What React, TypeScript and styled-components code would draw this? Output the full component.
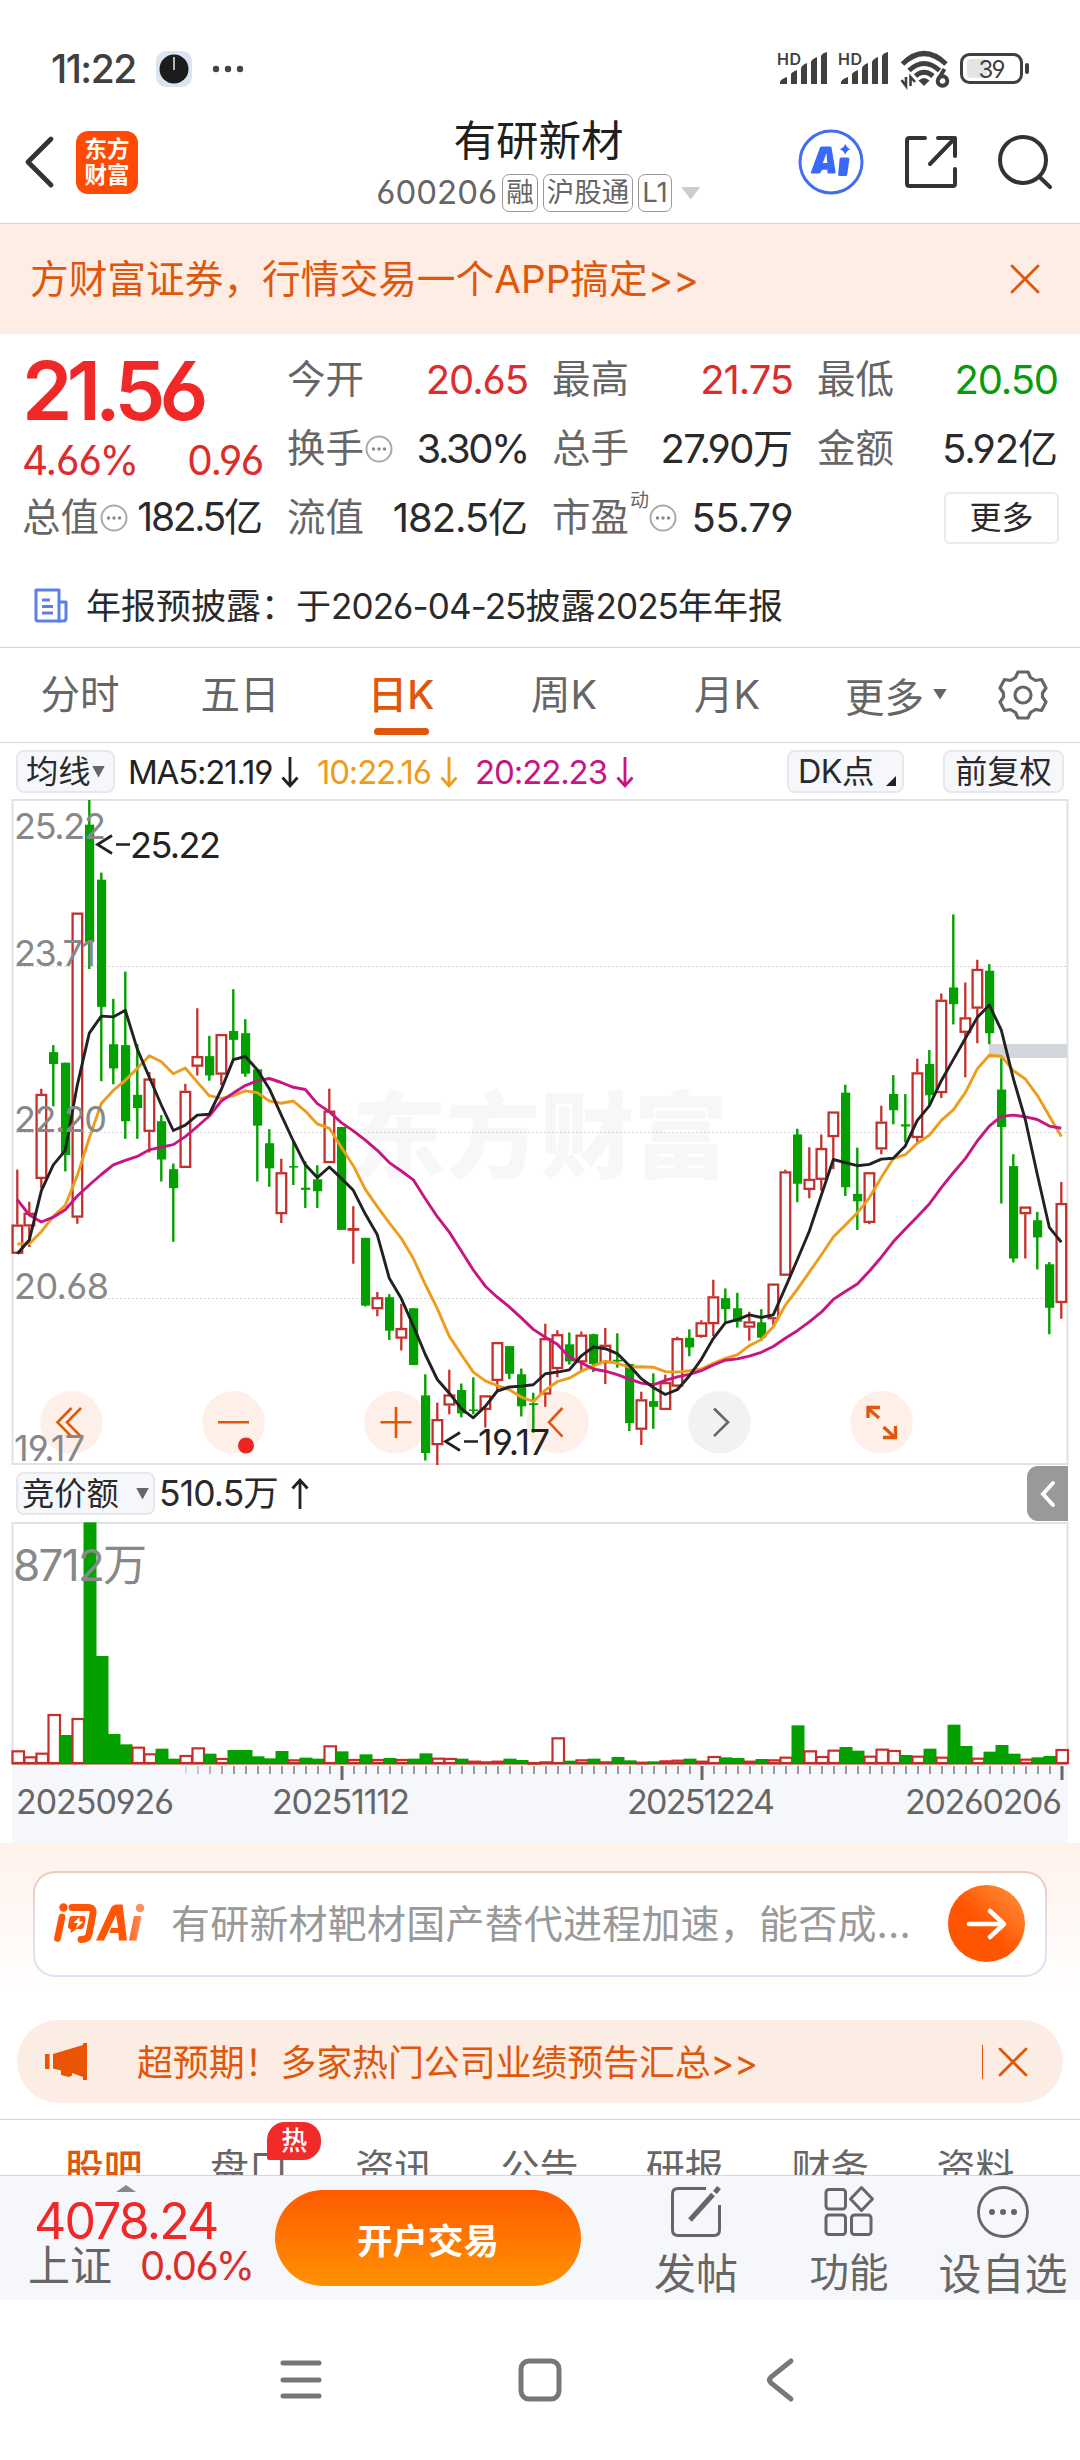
import React from "react";
import styled, { createGlobalStyle } from "styled-components";

const FONT = '"Inter", "Noto Sans CJK SC", sans-serif';
const RED = "#f02828";
const SOFT_RED = "#dd2c2c";
const GREEN = "#089a08";
const ORANGE = "#e0570c";
const INK = "#2a2a2a";
const GREY = "#666";

const GlobalStyle = createGlobalStyle`
  * { box-sizing: border-box; }
  body {
    margin: 0;
    background: #fff;
    font-family: ${FONT};
    font-feature-settings: "cv03", "cv04", "ss01" 0;
    color: ${INK};
  }
  svg { display: block; flex: none; overflow: visible; }
`;

const Screen = styled.div`
  width: 1080px;
  height: 2460px;
  display: flex;
  flex-direction: column;
  background: #fff;
  overflow: hidden;
  white-space: nowrap;
`;

const Txt = styled.span<{
  $size: number;
  $color?: string;
  $ls?: number;
  $weight?: number;
}>`
  font-size: ${(p) => p.$size}px;
  color: ${(p) => p.$color || INK};
  letter-spacing: ${(p) => p.$ls || 0}px;
  font-weight: ${(p) => p.$weight || 400};
  line-height: 1.2;
  display: inline-flex;
  align-items: baseline;
`;

const Num = styled.span<{ $ls: number; $size?: number }>`
  letter-spacing: ${(p) => p.$ls}px;
  font-size: ${(p) => (p.$size ? `${p.$size}px` : "inherit")};
`;

/* ---------- status bar ---------- */

const StatusBar = styled.div`
  height: 112px;
  padding: 26px 50px 0 51px;
  display: flex;
  align-items: center;
  justify-content: space-between;
`;

const Cluster = styled.div<{ $gap?: number }>`
  display: flex;
  align-items: center;
  gap: ${(p) => p.$gap || 0}px;
`;

const ClockIcon = () => (
  <svg width="36" height="36" viewBox="0 0 36 36">
    <rect width="36" height="36" rx="10" fill="#dbe5f2" />
    <circle cx="18" cy="18" r="14.5" fill="#1c1c1c" />
    <path d="M18 6v13" stroke="#ddd" strokeWidth="1.6" />
  </svg>
);

const Dots = () => (
  <svg width="32" height="8" viewBox="0 0 32 8" fill="#444">
    <circle cx="4" cy="4" r="3.2" />
    <circle cx="16" cy="4" r="3.2" />
    <circle cx="28" cy="4" r="3.2" />
  </svg>
);

const Signal = () => (
  <svg width="50" height="34" viewBox="0 0 50 34" fill="#404040">
    <text x="-1" y="12.500" fontSize="16" fontWeight="600" textLength="24">
      HD
    </text>
    <path d="M2 30q1-3 7-5v7h-7zM13 22q1-2 6-4v14h-6zM23 16q1-3 6-5v21h-6zM33 10q1-3 6-5v27h-6zM43 4q1-3 6-4v32h-6z" />
  </svg>
);

/* Wi-Fi 6 mark: three arcs, traffic arrows on the left and the generation digit on the right */
const Wifi = () => (
  <svg width="48" height="40" viewBox="0 0 48 40">
    <g fill="none" stroke="#404040" strokeWidth="5">
      <path d="M1.500 15Q23 -6 45 15" />
      <path d="M8 21.500Q23 7.500 38.500 21.500" />
      <path d="M14.500 27Q23 19.500 32 27" />
    </g>
    <path d="M23 37l-5.500-5.500q5.500-5 11 0z" fill="#404040" />
    <path d="M0.500 31l4.500 6V28M9.500 37V28l4.500 5" fill="none" stroke="#404040" strokeWidth="2.600" />
    <circle cx="41.500" cy="32" r="4.800" fill="#fff" stroke="#404040" strokeWidth="4" />
    <path d="M37.500 30l6-10" stroke="#404040" strokeWidth="4" />
  </svg>
);

const Battery = () => (
  <svg width="70" height="32" viewBox="0 0 70 32">
    <rect x="1.500" y="1.500" width="60" height="28" rx="8" fill="#fff" stroke="#404040" strokeWidth="3" />
    <rect x="7" y="6" width="20" height="19" rx="4" fill="#e4e4e4" />
    <rect x="65" y="10" width="4" height="11" rx="2" fill="#404040" />
    <text x="18.500" y="24.500" fontSize="24" fill="#404040" textLength="27">
      39
    </text>
  </svg>
);

/* ---------- header ---------- */

const Header = styled.header`
  height: 112px;
  border-bottom: 1px solid #d4d5d9;
  display: grid;
  grid-template-columns: 1fr auto 1fr;
  padding: 0 28px 0 24px;
`;

const HeaderLeft = styled.div`
  display: flex;
  align-items: center;
  gap: 22px;
  padding-bottom: 11px;
`;

const HeaderRight = styled.div`
  display: flex;
  align-items: center;
  justify-content: flex-end;
  gap: 40px;
  padding-bottom: 11px;
`;

const BrandMark = styled.div`
  width: 62px;
  height: 63px;
  border-radius: 12px;
  background: #ff4a05;
  color: #fff;
  font-size: 22.5px;
  font-weight: 700;
  line-height: 26px;
  display: flex;
  align-items: center;
  justify-content: center;
  text-align: center;
  white-space: pre;
`;

const TitleBlock = styled.div`
  display: flex;
  flex-direction: column;
  align-items: center;
  padding: 3px 0 0 1px;
`;

const CodeRow = styled.div`
  display: flex;
  align-items: center;
  height: 38px;
  margin-top: 8px;
  gap: 5px;
`;

const Tag = styled.span`
  height: 38px;
  padding: 0 3px;
  border: 1.5px solid #999;
  border-radius: 7px;
  color: ${GREY};
  font-size: 27.5px;
  line-height: 34px;
`;

const Tri = styled.i<{ $w: number; $h: number; $color: string; $up?: boolean; $ml?: number }>`
  width: ${(p) => p.$w}px;
  height: ${(p) => p.$h}px;
  margin-left: ${(p) => p.$ml || 0}px;
  flex: none;
  background: ${(p) => p.$color};
  clip-path: ${(p) =>
    p.$up ? "polygon(50% 0, 100% 100%, 0 100%)" : "polygon(0 0, 100% 0, 50% 100%)"};
`;

const BackIcon = () => (
  <svg width="30" height="52" viewBox="0 0 30 52">
    <path d="M27 3L4 26l23 23" fill="none" stroke="#333" strokeWidth="4.800" strokeLinecap="round" strokeLinejoin="round" />
  </svg>
);

const AiIcon = () => (
  <svg width="66" height="66" viewBox="0 0 66 66">
    <circle cx="33" cy="33" r="31" fill="none" stroke="#3f6ef5" strokeWidth="3" />
    <g fill="#3a68fb">
      <path
        fillRule="evenodd"
        d="M22 18.500q.8-1 2-1h8q1.400 0 1.600 1.400l4 24q.3 1.700-1.300 1.700h-5.500q-1.400 0-1.400-1.400v-2.400h-5.200l-1.500 2.500q-.8 1.300-2 1.300h-6.500q-2 0-1.100-1.800zM28.500 24l-3.700 10h4.500z"
      />
      <path d="M43 28.500h7q1.600 0 1.400 1.500l-2.200 15.500q-.2 1.500-1.700 1.500h-5.800q-1.700 0-1.500-1.600l1.400-15.400q.1-1.500 1.400-1.500z" />
      <path d="M47.500 15q1.300 4 5 5.200-4 1.400-5.200 5.200-1.500-3.800-5.300-5.200 4-1.400 5.500-5.200z" />
    </g>
  </svg>
);

const ShareIcon = () => (
  <svg width="54" height="54" viewBox="0 0 54 54">
    <g fill="none" stroke="#333" strokeWidth="4" strokeLinecap="round" strokeLinejoin="round">
      <path d="M21 3H5.500Q3 3 3 5.500v43Q3 51 5.500 51H49q2 0 2-2.500V34" />
      <path d="M34 3h17v18M51 3L26 29" />
    </g>
  </svg>
);

const SearchIcon = () => (
  <svg width="54" height="54" viewBox="0 0 54 54">
    <g fill="none" stroke="#333" strokeWidth="4" strokeLinecap="round">
      <circle cx="25" cy="25" r="23" />
      <path d="M41.500 42L52 52" />
    </g>
  </svg>
);

/* ---------- banner ---------- */

const Banner = styled.div`
  height: 110px;
  padding: 0 40px 0 30px;
  display: flex;
  align-items: center;
  justify-content: space-between;
  background: #fdede4;
`;

const CrossIcon = () => (
  <svg width="30" height="30" viewBox="0 0 30 30">
    <path d="M2 2l26 26M28 2L2 28" stroke={ORANGE} strokeWidth="2.800" strokeLinecap="round" />
  </svg>
);

/* ---------- quote ---------- */

const Quote = styled.section`
  height: 314px;
  border-bottom: 1px solid #d4d5d9;
  display: flex;
  flex-direction: column;
`;

const QuoteGrid = styled.div`
  height: 221px;
  padding: 11px 22px 0 22px;
  display: grid;
  grid-template-columns: repeat(4, 1fr);
  column-gap: 24px;
`;

const Col = styled.div`
  display: flex;
  flex-direction: column;
`;

const Cell = styled.div<{ $h?: number }>`
  height: ${(p) => p.$h || 69}px;
  display: flex;
  align-items: center;
  justify-content: space-between;
  min-width: 0;
`;

const LabelGroup = styled.span`
  display: flex;
  align-items: center;
  gap: 1px;
`;

const SupNote = styled.span`
  font-size: 19px;
  color: ${GREY};
  align-self: flex-start;
  margin: -9px -1px 0 0;
`;

const MoreButton = styled.button`
  width: 115px;
  height: 52px;
  margin-right: -1px;
  border: 2px solid #e8eaec;
  border-radius: 6px;
  background: #fff;
  font: 400 32px ${FONT};
  color: ${INK};
  padding: 0;
  line-height: 46px;
`;

const CellEnd = styled(Cell)`
  justify-content: flex-end;
`;

const Ellipsis = () => (
  <svg width="28" height="28" viewBox="0 0 28 28">
    <circle cx="14" cy="14" r="12.500" fill="none" stroke="#aaa" strokeWidth="2" />
    <g fill="#888">
      <circle cx="8.500" cy="14" r="1.700" />
      <circle cx="14" cy="14" r="1.700" />
      <circle cx="19.500" cy="14" r="1.700" />
    </g>
  </svg>
);

const Notice = styled.div`
  height: 54px;
  margin-top: 24px;
  padding-left: 34px;
  display: flex;
  align-items: center;
  gap: 18px;
`;

const ReportIcon = () => (
  <svg width="34" height="36" viewBox="0 0 34 36">
    <g fill="none" stroke="#5a7fe6" strokeWidth="3" strokeLinejoin="round">
      <path d="M2 2h23v31H4q-2 0-2-2z" />
      <path d="M25 14h7v16q0 3-3 3h-5" />
      <path d="M8 12h8M8 18.500h11M8 25h11" />
    </g>
  </svg>
);

type QuoteItem = {
  label: string;
  value: string;
  unit?: string;
  color?: string;
  info?: boolean;
  sup?: string;
  ls?: number;
};

const quoteColumns: QuoteItem[][] = [
  [
    { label: "今开", value: "20.65", color: SOFT_RED },
    { label: "换手", value: "3.30%", info: true, ls: -2.4 },
    { label: "流值", value: "182.5", unit: "亿" },
  ],
  [
    { label: "最高", value: "21.75", color: SOFT_RED },
    { label: "总手", value: "27.90", unit: "万", ls: -1.5 },
    { label: "市盈", value: "55.79", info: true, sup: "动", ls: -0.6 },
  ],
  [
    { label: "最低", value: "20.50", color: GREEN },
    { label: "金额", value: "5.92", unit: "亿" },
  ],
];

const Value = ({ value, unit, color, ls = -1.1 }: { value: string; unit?: string; color?: string; ls?: number }) => (
  <Txt $size={40} $color={color}>
    <Num $ls={ls}>{value}</Num>
    {unit}
  </Txt>
);

/* ---------- period tabs ---------- */

const Periods = styled.nav`
  height: 95px;
  border-bottom: 1px solid #d4d5d9;
  padding: 0 30px 0 0;
  display: flex;
  align-items: center;
`;

const Period = styled.div<{ $active?: boolean; $w?: number }>`
  width: ${(p) => p.$w || 162}px;
  height: 94px;
  display: flex;
  flex-direction: column;
  align-items: center;
  font-size: 39.5px;
  line-height: 94px;
  color: ${(p) => (p.$active ? ORANGE : GREY)};
  font-weight: ${(p) => (p.$active ? 500 : 400)};

  &::after {
    content: "";
    width: 55px;
    height: 7px;
    margin-top: -14px;
    flex: none;
    border-radius: 4px;
    background: ${(p) => (p.$active ? ORANGE : "transparent")};
  }
`;

const MorePeriod = styled.div`
  flex: 1;
  display: flex;
  align-items: center;
  gap: 9px;
  padding: 0 0 2px 37px;
  font-size: 39.5px;
  color: ${GREY};
`;

const GearIcon = () => (
  <svg width="54" height="54" viewBox="-27 -27 54 54" fill="none" stroke="#666" strokeWidth="3.200" strokeLinejoin="round">
    <path d="M-5 -23H5L7.500 -17.500L12.500 -14.500L18.500 -15.500L23 -7L19.500 -2V2L23 7L18.500 15.500L12.500 14.500L7.500 17.500L5 23H-5L-7.500 17.500L-12.500 14.500L-18.500 15.500L-23 7L-19.500 2V-2L-23 -7L-18.500 -15.500L-12.500 -14.500L-7.500 -17.500Z" />
    <circle r="8" />
  </svg>
);

/* ---------- indicator rows ---------- */

const IndicatorRow = styled.div`
  height: 57px;
  padding: 0 16px;
  display: flex;
  align-items: center;
`;

const Pill = styled.div<{ $w: number; $h?: number; $pad?: number }>`
  width: ${(p) => p.$w}px;
  height: ${(p) => p.$h || 43}px;
  padding: 0 ${(p) => p.$pad ?? 8}px;
  display: flex;
  align-items: center;
  justify-content: space-between;
  border: 2px solid #e6e8ec;
  border-radius: 8px;
  background: #f6f7fa;
  font-size: 32.3px;
  line-height: 38px;
`;

const MaItem = styled.div<{ $color: string; $w: number; $pad?: number }>`
  width: ${(p) => p.$w}px;
  padding-left: ${(p) => p.$pad || 0}px;
  display: flex;
  align-items: center;
  gap: 9px;
  color: ${(p) => p.$color};
  font-size: 33px;
`;

const Spacer = styled.div`
  flex: 1;
`;

const Corner = styled.i`
  width: 10px;
  height: 10px;
  align-self: flex-end;
  margin: 0 -3px 5px 0;
  background: #222;
  clip-path: polygon(100% 0, 100% 100%, 0 100%);
`;

const Arrow = ({ color, up }: { color: string; up?: boolean }) => (
  <svg width="18" height="32" viewBox="0 0 18 32" fill="none" stroke={color} strokeWidth="2.800">
    {up ? <path d="M9 31V2M1.500 10.500L9 2l7.500 8.500" /> : <path d="M9 1v29M1.500 21.500L9 30l7.500-8.500" />}
  </svg>
);

const VolumeHeader = styled.div`
  height: 57px;
  padding: 0 12px 0 16px;
  display: flex;
  align-items: center;
  gap: 4px;
`;

const AuctionValue = styled.div`
  display: flex;
  align-items: baseline;
  margin-right: 8px;
  font-size: 35.5px;
  line-height: 42px;
`;

const SideTab = styled.div`
  width: 41px;
  height: 55px;
  border-radius: 11px 0 0 11px;
  background: #999;
  display: flex;
  align-items: center;
  justify-content: center;
`;

/* ---------- chart data ---------- */

/* [direction, high, body top, body bottom, low] on a 1509-step price ladder starting at 22 */
type Candle = [0 | 1, number, number, number, number];

const candles: Candle[] = [
  [1, 862, 987, 1053, 1053], [1, 935, 960, 991, 1038], [1, 678, 690, 883, 905], [0, 579, 595, 622, 718],
  [0, 619, 619, 829, 866], [1, 278, 278, 971, 985], [0, 22, 78, 345, 406], [0, 187, 203, 492, 661],
  [0, 474, 577, 632, 668], [0, 412, 579, 752, 792], [0, 577, 692, 722, 792], [1, 640, 655, 776, 823],
  [0, 738, 752, 839, 889], [0, 848, 861, 904, 1026], [1, 667, 683, 858, 858], [1, 495, 604, 628, 648],
  [0, 558, 604, 648, 660], [1, 554, 554, 646, 670], [0, 452, 547, 567, 612], [0, 520, 552, 644, 651],
  [0, 634, 634, 762, 889], [0, 770, 802, 859, 901], [1, 837, 868, 963, 983], [0, 800, 854, 857, 897],
  [0, 843, 903, 908, 949], [0, 852, 884, 911, 949], [1, 678, 728, 847, 847], [0, 765, 765, 999, 999],
  [1, 945, 995, 999, 1076], [0, 1017, 1017, 1171, 1173], [1, 1140, 1152, 1179, 1195], [0, 1145, 1152, 1228, 1249],
  [1, 1167, 1222, 1246, 1273], [0, 1177, 1177, 1306, 1306], [0, 1327, 1375, 1506, 1523], [1, 1392, 1429, 1488, 1533],
  [1, 1317, 1373, 1398, 1418], [0, 1348, 1363, 1416, 1425], [0, 1334, 1407, 1410, 1418], [1, 1375, 1375, 1408, 1448],
  [1, 1254, 1254, 1342, 1365], [0, 1263, 1263, 1326, 1338], [0, 1314, 1327, 1400, 1423], [0, 1369, 1393, 1397, 1460],
  [1, 1212, 1245, 1373, 1401], [1, 1227, 1236, 1315, 1334], [0, 1232, 1259, 1298, 1305], [1, 1230, 1237, 1300, 1322],
  [0, 1235, 1236, 1304, 1322], [1, 1222, 1260, 1302, 1349], [0, 1234, 1294, 1298, 1312], [0, 1304, 1304, 1438, 1456],
  [1, 1367, 1384, 1453, 1488], [0, 1325, 1388, 1401, 1451], [1, 1328, 1345, 1408, 1408], [1, 1242, 1245, 1355, 1357],
  [0, 1225, 1244, 1266, 1286], [1, 1204, 1209, 1242, 1244], [1, 1112, 1150, 1213, 1240], [0, 1132, 1154, 1179, 1210],
  [0, 1142, 1177, 1208, 1221], [1, 1185, 1207, 1221, 1251], [0, 1179, 1209, 1244, 1251], [1, 1121, 1121, 1202, 1215],
  [1, 862, 866, 1103, 1103], [0, 769, 782, 894, 936], [1, 811, 883, 908, 927], [1, 782, 813, 885, 910],
  [1, 730, 730, 788, 861], [0, 669, 687, 902, 922], [0, 812, 917, 934, 999], [1, 868, 868, 983, 986],
  [1, 717, 753, 816, 827], [0, 647, 690, 727, 759], [0, 690, 759, 764, 800], [1, 610, 641, 790, 802],
  [0, 590, 622, 693, 717], [1, 462, 476, 688, 699], [0, 282, 448, 486, 532], [1, 437, 516, 551, 652],
  [1, 385, 406, 496, 575], [0, 395, 410, 552, 577], [0, 609, 680, 765, 939], [0, 827, 854, 1064, 1073],
  [1, 946, 946, 963, 1064], [0, 958, 977, 1016, 1089], [0, 1072, 1077, 1176, 1236], [1, 890, 938, 1165, 1201],
];

const ma5 = [
  1053, 1022, 910, 851, 818, 670, 552, 513, 515, 500, 588, 652, 715, 773, 761, 738, 736, 680, 612, 605, 635, 678,
  738, 797, 851, 880, 856, 882, 909, 963, 1010, 1109, 1155, 1217, 1282, 1339, 1370, 1405, 1426, 1400, 1365, 1356,
  1354, 1351, 1326, 1322, 1317, 1285, 1265, 1269, 1280, 1307, 1337, 1357, 1373, 1362, 1331, 1293, 1246, 1210, 1203,
  1192, 1198, 1192, 1130, 1067, 1002, 920, 839, 846, 853, 850, 838, 836, 808, 750, 717, 660, 612, 564, 516, 488,
  545, 655, 748, 873, 993, 1027,
];

const ma10 = [
  1031, 1030, 1003, 968, 943, 875, 790, 712, 682, 659, 632, 603, 617, 644, 631, 663, 694, 700, 694, 683, 687, 706,
  711, 706, 729, 758, 768, 811, 853, 907, 946, 983, 1018, 1064, 1123, 1178, 1241, 1282, 1322, 1342, 1353, 1362, 1379,
  1389, 1363, 1344, 1336, 1320, 1308, 1297, 1302, 1311, 1310, 1311, 1321, 1322, 1319, 1315, 1302, 1291, 1283, 1262,
  1248, 1219, 1170, 1134, 1095, 1056, 1015, 988, 960, 926, 880, 837, 828, 802, 784, 750, 726, 687, 633, 602, 604,
  637, 656, 693, 740, 787,
];

const ma20 = [
  930, 965, 981, 970, 953, 922, 897, 873, 851, 841, 832, 817, 811, 805, 787, 764, 740, 706, 688, 671, 660, 655, 664,
  675, 680, 712, 730, 755, 774, 795, 818, 846, 865, 885, 928, 969, 1004, 1047, 1090, 1127, 1152, 1174, 1199, 1225,
  1243, 1259, 1288, 1301, 1315, 1320, 1328, 1338, 1347, 1351, 1341, 1333, 1327, 1319, 1306, 1295, 1292, 1286, 1277,
  1264, 1245, 1228, 1208, 1186, 1157, 1139, 1122, 1093, 1061, 1026, 997, 969, 940, 903, 869, 837, 797, 763, 741, 738,
  742, 748, 763, 768,
];

/* bar tops in thirds of a pixel; the baseline is 910 */
const volumeTops = [
  871, 889, 878, 762, 825, 774, 187, 588, 822, 853, 860, 880, 866, 896, 885, 862, 881, 894, 870, 870, 889, 895, 873,
  898, 893, 896, 856, 874, 897, 883, 897, 894, 897, 896, 880, 893, 894, 896, 902, 904, 902, 896, 900, 906, 904, 832,
  902, 898, 896, 904, 891, 901, 905, 904, 901, 899, 896, 902, 888, 892, 894, 902, 897, 898, 890, 796, 871, 888, 869,
  861, 872, 887, 866, 870, 885, 887, 866, 890, 794, 858, 893, 875, 855, 881, 896, 892, 888, 867,
];

/* sessions whose auction closed higher, drawn hollow */
const risingSessions = new Set([
  0, 1, 2, 3, 5, 10, 11, 14, 15, 17, 23, 26, 28, 30, 32, 35, 36, 38, 39, 40, 43, 44, 45, 47, 49, 52, 54, 55, 57, 58,
  61, 63, 64, 66, 67, 68, 71, 72, 73, 75, 77, 80, 84, 87,
]);

const STEP = 12;
const cx = (i: number) => 17.3 + i * STEP;
const py = (v: number) => (v - 22) / 2.2725;
const UP = "#c5302d";
const DOWN = "#04a000";

const line = (values: number[]) => values.map((v, i) => `${cx(i)},${py(v).toFixed(1)}`).join(" ");

const axisLabels: [string, number, number][] = [
  ["25.22", 38.5, 92],
  ["23.71", 165.5, 82],
  ["22.20", 332, 93],
  ["20.68", 498.5, 95],
  ["19.17", 660.5, 71],
];

const PriceChart = () => (
  <svg width="1080" height="665" viewBox="0 0 1080 665">
    <text x="352" y="371" fontSize="94" fontWeight="900" fill="#f7f7f7" textLength="376">
      东方财富
    </text>
    {[166.500, 332.500, 498.500].map((y) => (
      <path key={y} d={`M12 ${y}H1067`} stroke="#d6d6d6" strokeWidth="1" strokeDasharray="2 2" />
    ))}
    <rect x="12.500" y="0" width="1055" height="664" fill="none" stroke="#e2e2e4" strokeWidth="2" />
    {[71.500, 233.500, 395.500, 557.500, 719.500, 881.500].map((x, i) => (
      <circle key={x} cx={x} cy="622.300" r="31.300" fill={i === 4 ? "#f2f2f2" : "#fef0e8"} />
    ))}
    <g fill="none" stroke={ORANGE} strokeWidth="2.600">
      <path d="M71.500 608L57.500 622.300l14 14.300M81 608l-14 14.300l14 14.300M218 622.300h31M380.500 622.300h31M396 607v31M562.500 608l-13.500 14.300l13.500 14.300" />
      <path strokeWidth="3.300" d="M868 618v-10.500h12M867.500 608l11.500 10M883 637.500h12.500V626M895.500 638l-12-11" />
    </g>
    <path d="M714 608.500l14 13.800l-14 13.800" fill="none" stroke="#666" strokeWidth="2.600" />
    <rect x="989" y="244" width="78" height="14" fill="#d3d7dd" />
    {candles.map(([up, hi, top, bot, lo], i) => {
      const x = cx(i);
      const t = py(top);
      const b = py(bot);
      return up ? (
        <g key={i} stroke={UP} strokeWidth="2.300" fill="none">
          <path d={`M${x} ${py(hi)}V${t}M${x} ${b}V${py(lo)}`} />
          <rect x={x - 4.700} y={t + 1} width="9.600" height={Math.max(b - t - 2, 0.500)} fill="#fff" />
        </g>
      ) : (
        <g key={i} fill={DOWN}>
          <rect x={x - 1.200} y={py(hi)} width="2.400" height={py(lo) - py(hi)} />
          <rect x={x - 4.300} y={t} width="9.200" height={Math.max(b - t, 1.500)} />
        </g>
      );
    })}
    <g fill="none" strokeWidth="2.900" strokeLinejoin="round">
      <polyline points={line(ma10)} stroke="#ee9c1c" />
      <polyline points={line(ma20)} stroke="#c71583" />
      <polyline points={line(ma5)} stroke="#222" />
    </g>
    <circle cx="246" cy="645.500" r="8" fill="#f0241f" />
    <g fontSize="36" fill="#888">
      {axisLabels.map(([label, y, w]) => (
        <text key={label} x="14" y={y} textLength={w}>
          {label}
        </text>
      ))}
    </g>
    <g fontSize="36" fill="#222">
      <text x="130" y="58" textLength="91">
        25.22
      </text>
      <text x="478" y="655" textLength="72">
        19.17
      </text>
      <path
        d="M112 35.500L97.500 44.500l14.500 9M116 44.500h14M460 632.500L445.500 641.500l14.500 9M464 641.500h14"
        fill="none"
        stroke="#222"
        strokeWidth="2.700"
      />
    </g>
  </svg>
);

const dates: [string, number, number][] = [
  ["20250926", 16, 158],
  ["20251112", 272, 138],
  ["20251224", 627, 148],
  ["20260206", 905, 157],
];

const VolumeChart = () => (
  <svg width="1080" height="321" viewBox="0 0 1080 321">
    <rect x="12" y="243" width="1056" height="78" fill="#f6f7fa" />
    <path d="M12.500 243V1H1067.500V243" fill="none" stroke="#e2e2e4" strokeWidth="2" />
    {volumeTops.map((v, i) => {
      const x = 12 + i * STEP;
      const y = (v - 186) / 3;
      const bottom = 242;
      return risingSessions.has(i) ? (
        <rect
          key={i}
          x={x + 0.500}
          y={y + 1}
          width="11.500"
          height={Math.max(bottom - y - 2, 0.500)}
          fill="#fff"
          stroke={UP}
          strokeWidth="2.200"
        />
      ) : (
        <rect key={i} x={x - 0.500} y={y} width="13" height={bottom - y} fill={DOWN} />
      );
    })}
    <path d="M12 242H1067" stroke="#a03020" strokeWidth="1.200" />
    {Array.from({ length: 74 }, (_, k) => {
      const i = k + 14;
      const major = i === 27 || i === 57 || i === 87;
      return (
        <rect
          key={i}
          x={18 + i * STEP - (major ? 1.500 : 1)}
          y="244"
          width={major ? 3 : 2}
          height={major ? 14 : 8}
          fill={major ? "#666" : "#999"}
          opacity={Math.min(1, 0.300 + k * 0.200)}
        />
      );
    })}
    <text x="13" y="58.500" fontSize="44" fill="#888" textLength="134">
      8712万
    </text>
    <g fontSize="34" fill="#666">
      {dates.map(([d, x, w]) => (
        <text key={d} x={x} y="292" textLength={w}>
          {d}
        </text>
      ))}
    </g>
  </svg>
);

/* ---------- AI question ---------- */

const AiSection = styled.section`
  height: 177px;
  padding: 28px 33px 0;
  background: linear-gradient(#fff2ec, #fff 85%);
`;

const AiCard = styled.div`
  height: 106px;
  padding: 0 20px 0 19px;
  border: 2px solid transparent;
  border-radius: 22px;
  background: linear-gradient(#fff, #fff) padding-box, linear-gradient(#ecc9be, #e8dce4 50%, #dbe3f3) border-box;
  display: flex;
  align-items: center;
`;

const AiText = styled.div`
  flex: 1;
  padding: 0 0 7px 27px;
  font-size: 39px;
  letter-spacing: 0.2px;
  color: #999;
`;

const AskLogo = () => (
  <svg width="90" height="42" viewBox="0 0 90 42">
    <defs>
      <linearGradient id="ask" x1="0" x2="1">
        <stop offset="0.600" stopColor="#ff5505" />
        <stop offset="1" stopColor="#ff8f5c" />
      </linearGradient>
    </defs>
    <g fill="none" stroke="#ff5505" strokeWidth="6.800" strokeLinecap="round" strokeLinejoin="round">
      <path d="M8 14L3.500 35.500" />
      <path d="M18 4.500h16q6 0 5 6l-4 21q-1 5-8 5" />
    </g>
    <circle cx="9.500" cy="4.500" r="4.200" fill="#ff5505" />
    <path d="M18 13h11q3 0 2.500 3l-1.300 7q-.6 3-3.500 3h-4l-6 4v-4q-3 0-2.700-3l1.200-7q.5-3 2.800-3z" fill="#ff5505" />
    <path d="M21.500 26l2.500-6h-4.500l6-6v4.500h4z" fill="#fff" />
    <path
      fill="url(#ask)"
      fillRule="evenodd"
      d="M42 37.500L56.500 6q2-4.500 6-4.500h6l4.500 36h-8l-.7-7.500h-9l1.800-5h7L62 12L50 37.500zM80 13h7.500l-5 24.500h-7.500z"
    />
    <circle cx="86" cy="5" r="4.200" fill="#ff8f5c" />
  </svg>
);

const SendButton = styled.div`
  width: 77px;
  height: 77px;
  margin-bottom: 1px;
  border-radius: 50%;
  background: linear-gradient(45deg, #ff5500 45%, #ff9440);
  display: flex;
  align-items: center;
  justify-content: center;
`;

/* ---------- promo ---------- */

const PromoWrap = styled.div`
  height: 100px;
  padding: 0 17px;
  border-bottom: 1px solid #d4d5d9;
`;

const Promo = styled.div`
  height: 83px;
  border-radius: 42px;
  padding: 0 35px 0 28px;
  background: #fcede4;
  display: flex;
  align-items: center;
`;

const PromoText = styled.div`
  flex: 1;
  padding: 0 0 4px 50px;
  font-size: 36px;
  letter-spacing: -0.15px;
  color: ${ORANGE};
`;

const Divider = styled.i`
  width: 1px;
  height: 34px;
  margin-right: 15px;
  background: ${ORANGE};
`;

const Megaphone = () => (
  <svg width="42" height="37" viewBox="0 0 42 37" fill="#ea5504">
    <path d="M0 11h4.500v15H0zM8 11L38 2V0h4v37h-4v-3L27 30v2.500l-3 1.500l-8-2v-4.500l-8-2z" />
  </svg>
);

/* ---------- section tabs ---------- */

const Sections = styled.nav`
  height: 55px;
  padding: 24px 0 0 31px;
  display: flex;
  overflow: hidden;
`;

const SectionTab = styled.div<{ $active?: boolean }>`
  width: 145.3px;
  flex: none;
  position: relative;
  text-align: center;
  font-size: 39px;
  line-height: 47px;
  font-weight: ${(p) => (p.$active ? 500 : 400)};
  color: ${(p) => (p.$active ? ORANGE : GREY)};
`;

const HotBadge = styled.span`
  position: absolute;
  left: 91px;
  top: -22px;
  width: 54px;
  height: 38px;
  border-radius: 18px 18px 18px 2px;
  background: #f12a2a;
  color: #fff;
  font-size: 26px;
  font-weight: 500;
  line-height: 37px;
`;

/* ---------- bottom bar ---------- */

const BottomBar = styled.div`
  height: 125px;
  border-top: 1px solid #d4d5d9;
  background: #f6f7fa;
  display: flex;
`;

const IndexBox = styled.div`
  width: 275px;
  flex: none;
  padding: 9px 0 0 28px;
  display: flex;
  flex-direction: column;
`;

const IndexTri = styled.div`
  height: 7px;
  padding-left: 88px;
  display: flex;
`;

const IndexValue = styled.div`
  height: 52px;
  padding-left: 6px;
  font-size: 50px;
  line-height: 58px;
  letter-spacing: -1.9px;
  color: ${RED};
`;

const IndexLine = styled.div`
  display: flex;
  align-items: center;
  gap: 28px;
  height: 44px;
`;

const TradeButton = styled.button`
  width: 306px;
  height: 96px;
  flex: none;
  margin-top: 14px;
  padding: 0;
  border: 0;
  border-radius: 48px;
  background: linear-gradient(#ff5a00, #ff9200);
  color: #fff;
  font: 700 35.5px ${FONT};
`;

const Action = styled.div<{ $w: number }>`
  width: ${(p) => p.$w}px;
  flex: none;
  padding-top: 10px;
  display: flex;
  flex-direction: column;
  align-items: center;
  gap: 10px;
`;

const ActionLabel = styled.div<{ $size: number; $down?: number }>`
  font-size: ${(p) => p.$size}px;
  line-height: 50px;
  padding-top: ${(p) => p.$down || 0}px;
  color: ${GREY};
`;

const Actions = styled.div`
  flex: none;
  padding-left: 35px;
  display: flex;
`;

const EditIcon = () => (
  <svg width="52" height="52" viewBox="0 0 52 52" fill="none" stroke="#666" strokeWidth="3">
    <path d="M36 2.500H8Q2.500 2.500 2.500 8v36Q2.500 49.500 8 49.500h36q5.500 0 5.500-5.500V19" />
    <path d="M20 34L43 8.500" strokeWidth="5" />
    <path d="M45 6.500L49 1.500" strokeWidth="5" />
  </svg>
);

const GridIcon = () => (
  <svg width="52" height="52" viewBox="0 0 52 52" fill="none" stroke="#666" strokeWidth="3">
    <rect x="3" y="3.500" width="19.500" height="19.500" rx="3" />
    <rect x="3" y="29" width="19.500" height="19.500" rx="3" />
    <rect x="28.500" y="29" width="19.500" height="19.500" rx="3" />
    <path d="M38.500 1.500L49.500 13L38.500 24.500L27.500 13Z" strokeLinejoin="round" />
  </svg>
);

const CircleDots = () => (
  <svg width="52" height="52" viewBox="0 0 52 52">
    <circle cx="26" cy="26" r="24.500" fill="none" stroke="#666" strokeWidth="2.800" />
    <g fill="#666">
      <circle cx="15" cy="26" r="3" />
      <circle cx="26" cy="26" r="3" />
      <circle cx="37" cy="26" r="3" />
    </g>
  </svg>
);

const NavBar = styled.div`
  flex: 1;
  padding: 0 280px;
  display: grid;
  grid-template-columns: 1fr auto 1fr;
  align-items: center;

  svg:last-child {
    justify-self: end;
    margin-right: 6px;
  }
`;

export default function App() {
  return (
    <>
      <GlobalStyle />
      <Screen>
        <StatusBar>
          <Cluster $gap={20}>
            <Txt $size={39} $color="#404040" $weight={500} $ls={-1.500}>
              11:22
            </Txt>
            <ClockIcon />
            <Dots />
          </Cluster>
          <Cluster $gap={11.500}>
            <Signal />
            <Signal />
            <Wifi />
            <Battery />
          </Cluster>
        </StatusBar>

        <Header>
          <HeaderLeft>
            <BackIcon />
            <BrandMark>{"东方\n财富"}</BrandMark>
          </HeaderLeft>
          <TitleBlock>
            <Txt $size={42.500} $color="#1f1f1f">
              有研新材
            </Txt>
            <CodeRow>
              <Txt $size={33} $color={GREY}>
                600206
              </Txt>
              <Tag>融</Tag>
              <Tag>沪股通</Tag>
              <Tag>L1</Tag>
              <Tri $w={20} $h={13} $color="#ccc" $ml={4} />
            </CodeRow>
          </TitleBlock>
          <HeaderRight>
            <AiIcon />
            <ShareIcon />
            <SearchIcon />
          </HeaderRight>
        </Header>

        <Banner>
          <Txt $size={38.700} $color={ORANGE}>
            方财富证券，行情交易一个APP搞定&gt;&gt;
          </Txt>
          <CrossIcon />
        </Banner>

        <Quote>
          <QuoteGrid>
            <Col>
              <Cell $h={94}>
                <Txt $size={81} $color={RED} $weight={600} $ls={-5.800}>
                  21.56
                </Txt>
              </Cell>
              <Cell $h={44}>
                <Txt $size={40.500} $color={SOFT_RED} $ls={-1.200}>
                  4.66%
                </Txt>
                <Txt $size={40.500} $color={SOFT_RED} $ls={-1.200}>
                  0.96
                </Txt>
              </Cell>
              <Cell>
                <LabelGroup>
                  <Txt $size={38.500} $color={GREY}>
                    总值
                  </Txt>
                  <Ellipsis />
                </LabelGroup>
                <Txt $size={39}>
                  <Num $ls={-2.300}>182.5</Num>亿
                </Txt>
              </Cell>
            </Col>
            {quoteColumns.map((col, c) => (
              <Col key={c}>
                {col.map((q) => (
                  <Cell key={q.label}>
                    <LabelGroup>
                      <Txt $size={38.500} $color={GREY}>
                        {q.label}
                      </Txt>
                      {q.sup && <SupNote>{q.sup}</SupNote>}
                      {q.info && <Ellipsis />}
                    </LabelGroup>
                    <Value value={q.value} unit={q.unit} color={q.color} ls={q.ls} />
                  </Cell>
                ))}
                {c === 2 && (
                  <CellEnd>
                    <MoreButton>更多</MoreButton>
                  </CellEnd>
                )}
              </Col>
            ))}
          </QuoteGrid>
          <Notice>
            <ReportIcon />
            <Txt $size={35}>
              年报预披露：于<Num $ls={-0.900}>2026-04-25</Num>披露<Num $ls={-0.900}>2025</Num>年年报
            </Txt>
          </Notice>
        </Quote>

        <Periods>
          <Period $w={160}>分时</Period>
          <Period $w={160}>五日</Period>
          <Period $active>日K</Period>
          <Period $w={164}>周K</Period>
          <Period>月K</Period>
          <MorePeriod>
            更多
            <Tri $w={14} $h={11} $color="#666" />
          </MorePeriod>
          <GearIcon />
        </Periods>

        <IndicatorRow>
          <Pill $w={99}>
            均线
            <Tri $w={13} $h={12} $color="#666" />
          </Pill>
          <MaItem $color="#222" $w={202} $pad={13}>
            <Num $ls={-1.200}>MA5:21.19</Num>
            <Arrow color="#222" />
          </MaItem>
          <MaItem $color="#ee9c1c" $w={158}>
            <Num $ls={-1.200}>10:22.16</Num>
            <Arrow color="#ee9c1c" />
          </MaItem>
          <MaItem $color="#c71583" $w={170}>
            <Num $ls={-1.100}>20:22.23</Num>
            <Arrow color="#c71583" />
          </MaItem>
          <Spacer />
          <Cluster $gap={39}>
            <Pill $w={117} $pad={9}>
              <Num $ls={-0.500}>DK点</Num>
              <Corner />
            </Pill>
            <Pill $w={121} $pad={10}>
              前复权
            </Pill>
          </Cluster>
        </IndicatorRow>

        <PriceChart />

        <VolumeHeader>
          <Pill $w={139} $pad={4}>
            竞价额
            <Tri $w={13} $h={12} $color="#666" />
          </Pill>
          <AuctionValue>
            <Num $ls={-0.900}>510.5</Num>万
          </AuctionValue>
          <Arrow color="#222" up />
          <Spacer />
          <SideTab>
            <svg width="16" height="28" viewBox="0 0 16 28">
              <path d="M13 3L3 14l10 11" fill="none" stroke="#fff" strokeWidth="4" strokeLinecap="round" />
            </svg>
          </SideTab>
        </VolumeHeader>

        <VolumeChart />

        <AiSection>
          <AiCard>
            <AskLogo />
            <AiText>有研新材靶材国产替代进程加速，能否成...</AiText>
            <SendButton>
              <svg width="40" height="34" viewBox="0 0 40 34" fill="none" stroke="#fff" strokeWidth="4.500">
                <path d="M2 17h34M23 4l14 13l-14 13" strokeLinecap="round" strokeLinejoin="round" />
              </svg>
            </SendButton>
          </AiCard>
        </AiSection>

        <PromoWrap>
          <Promo>
            <Megaphone />
            <PromoText>超预期！多家热门公司业绩预告汇总&gt;&gt;</PromoText>
            <Divider />
            <CrossIcon />
          </Promo>
        </PromoWrap>

        <Sections>
          <SectionTab $active>股吧</SectionTab>
          <SectionTab>
            盘口<HotBadge>热</HotBadge>
          </SectionTab>
          <SectionTab>资讯</SectionTab>
          <SectionTab>公告</SectionTab>
          <SectionTab>研报</SectionTab>
          <SectionTab>财务</SectionTab>
          <SectionTab>资料</SectionTab>
        </Sections>

        <BottomBar>
          <IndexBox>
            <IndexTri>
              <Tri $w={20} $h={7} $color="#888" $up />
            </IndexTri>
            <IndexValue>4078.24</IndexValue>
            <IndexLine>
              <Txt $size={42} $color={GREY}>
                上证
              </Txt>
              <Txt $size={40} $color={SOFT_RED} $ls={-1.500}>
                0.06%
              </Txt>
            </IndexLine>
          </IndexBox>
          <TradeButton>开户交易</TradeButton>
          <Actions>
            <Action $w={160}>
              <EditIcon />
              <ActionLabel $size={42} $down={1}>发帖</ActionLabel>
            </Action>
            <Action $w={146}>
              <GridIcon />
              <ActionLabel $size={39.500}>功能</ActionLabel>
            </Action>
            <Action $w={162}>
              <CircleDots />
              <ActionLabel $size={43} $down={1}>设自选</ActionLabel>
            </Action>
          </Actions>
        </BottomBar>

        <NavBar>
          <svg width="42" height="42" viewBox="0 0 42 42" stroke="#777" strokeWidth="5" strokeLinecap="round">
            <path d="M3 4h36M3 21h36M3 37h36" />
          </svg>
          <svg width="44" height="44" viewBox="0 0 44 44" fill="none" stroke="#777" strokeWidth="5">
            <rect x="3" y="3" width="38" height="38" rx="8" />
          </svg>
          <svg width="28" height="44" viewBox="0 0 28 44" fill="none" stroke="#777" strokeWidth="5" strokeLinecap="round">
            <path d="M25 3L5 19q-3 3 0 6l20 16" />
          </svg>
        </NavBar>
      </Screen>
    </>
  );
}
